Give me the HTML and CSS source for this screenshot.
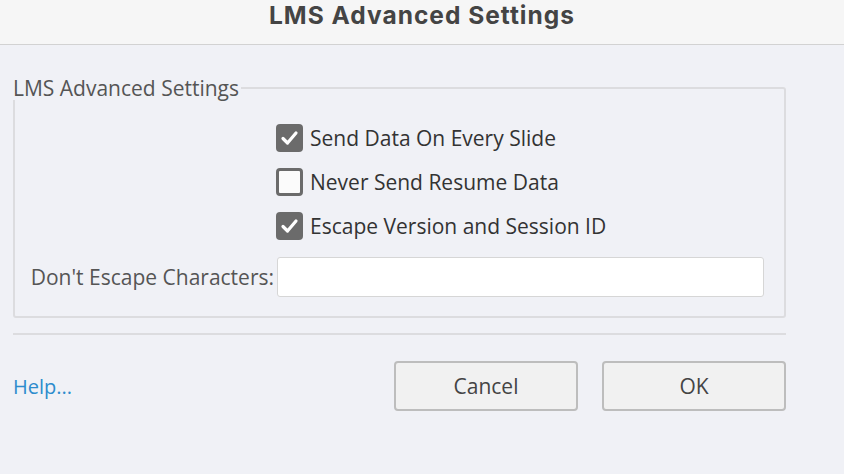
FILE: index.html
```html
<!DOCTYPE html>
<html>
<head>
<meta charset="utf-8">
<link rel="stylesheet" href="styles.css">
<title>LMS Advanced Settings</title>
</head>
<body>
<header class="titlebar"><h1 class="title">LMS Advanced Settings</h1></header>
<main class="content">
  <fieldset class="group">
    <legend class="legend">LMS Advanced Settings</legend>
    <div class="grid">
      <div class="cell-empty"></div>
      <label class="check"><span class="box on"><svg viewBox="0 0 27 28" width="27" height="28"><polyline points="7,14.5 11.5,19 20,9" fill="none" stroke="#fff" stroke-width="3.2" stroke-linecap="round" stroke-linejoin="round"/></svg></span><span class="check-text">Send Data On Every Slide</span></label>
      <div class="cell-empty"></div>
      <label class="check"><span class="box off"></span><span class="check-text">Never Send Resume Data</span></label>
      <div class="cell-empty"></div>
      <label class="check"><span class="box on"><svg viewBox="0 0 27 28" width="27" height="28"><polyline points="7,14.5 11.5,19 20,9" fill="none" stroke="#fff" stroke-width="3.2" stroke-linecap="round" stroke-linejoin="round"/></svg></span><span class="check-text">Escape Version and Session ID</span></label>
      <label class="field-label">Don't Escape Characters:</label>
      <div class="input"></div>
    </div>
  </fieldset>
  <div class="separator"></div>
  <div class="footer">
    <a class="help">Help...</a>
    <div class="buttons">
      <div class="btn">Cancel</div>
      <div class="btn">OK</div>
    </div>
  </div>
</main>
</body>
</html>
```
FILE: styles.css
```css
html, body {
  margin: 0;
  padding: 0;
}
body {
  width: 844px;
  height: 474px;
  background: #f0f1f6;
  font-family: "Open Sans", "Noto Sans", sans-serif;
  color: #333;
  overflow: hidden;
}
.titlebar {
  height: 44px;
  background: #f6f6f6;
  border-bottom: 1px solid #d2d2d2;
  display: flex;
  align-items: center;
  justify-content: center;
}
.title {
  margin: 0;
  font-family: "Inter", "Open Sans", sans-serif;
  font-weight: 700;
  font-size: 24.5px;
  letter-spacing: 1px;
  color: #444;
  padding-bottom: 14px;
  padding-top: 0;
}
.content {
  padding: 31px 58px 0 13px;
}
.group {
  margin: 0;
  padding: 16px 20px 19px 0;
  border: 2px solid #dcdcdf;
  border-radius: 3px;
  min-width: 0;
}
.legend {
  padding: 0 2px 0 0;
  margin-left: -2px;
  font-size: 21px;
  line-height: 24px;
  color: #555;
}
.grid {
  display: grid;
  grid-template-columns: 261px 1fr;
  grid-template-rows: 44px 44px 44px 49px;
  align-items: start;
}
.grid .check { height: 44px; }
.grid .field-label, .grid .input {
  margin-top: 9px;
}
.check {
  display: flex;
  align-items: center;
  gap: 7px;
  font-size: 21px;
  color: #333;
}
.box {
  width: 27px;
  height: 28px;
  box-sizing: border-box;
  border-radius: 4px;
  display: block;
  flex: none;
}
.box svg { display: block; }
.box.on { background: #6b6b6b; }
.box.off { background: #fbfbfb; border: 3px solid #6b6b6b; }
.field-label {
  font-size: 21px;
  color: #555;
  text-align: right;
  padding-right: 2px;
  line-height: 40px;
  white-space: nowrap;
}
.input {
  height: 40px;
  box-sizing: border-box;
  background: #fff;
  border: 1px solid #d6d6d6;
  border-radius: 3px;
  margin-left: 1px;
}
.separator {
  height: 2px;
  background: #dcdcdf;
  margin-top: 15px;
}
.footer {
  display: flex;
  align-items: center;
  justify-content: space-between;
  margin-top: 26px;
}
.help {
  font-size: 20px;
  color: #2d8ccd;
}
.buttons {
  display: flex;
  gap: 24px;
}
.btn {
  width: 184px;
  height: 50px;
  box-sizing: border-box;
  border: 2px solid #bdbdbd;
  border-radius: 4px;
  background: #f1f1f1;
  display: flex;
  align-items: center;
  justify-content: center;
  font-size: 21px;
  color: #444;
}
```
